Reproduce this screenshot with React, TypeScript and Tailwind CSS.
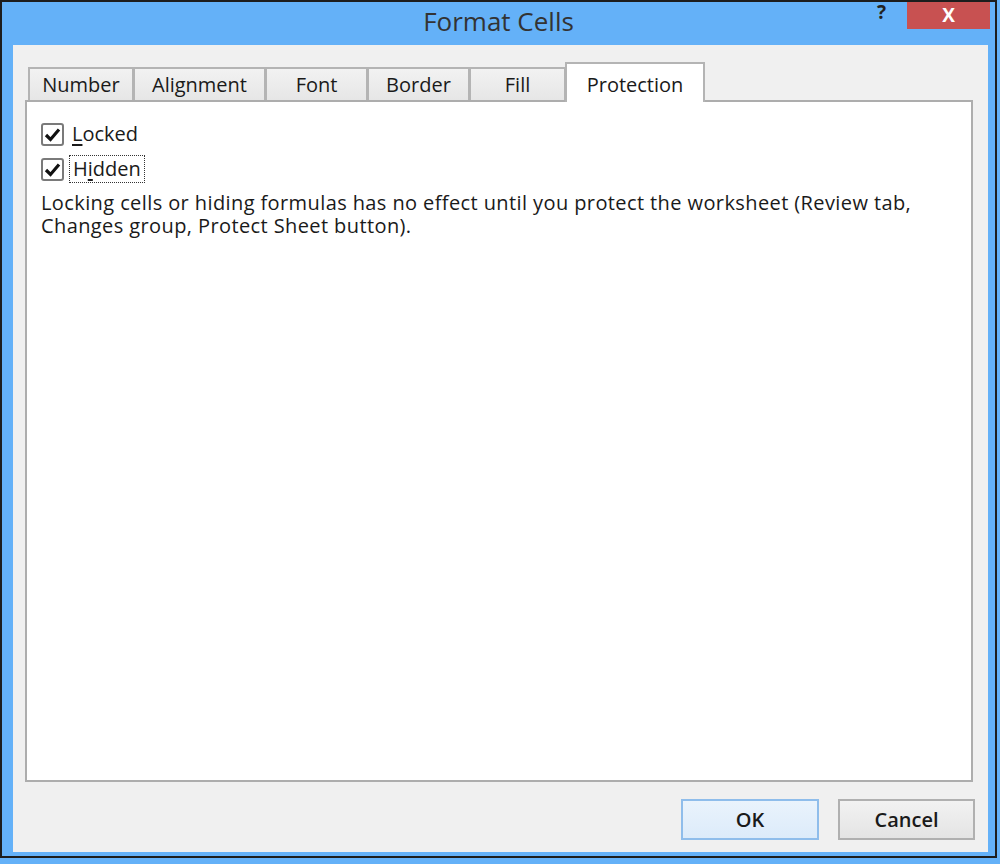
import { useState } from "react"

type Tab = { name: string; width: string }

const tabs: Tab[] = [
  { name: "Number", width: "w-[106px]" },
  { name: "Alignment", width: "w-[133px]" },
  { name: "Font", width: "w-[103px]" },
  { name: "Border", width: "w-[103px]" },
  { name: "Fill", width: "w-[97px]" },
]

const CheckBox = ({ checked }: { checked: boolean }) => (
  <div className="w-[23px] h-[23px] rounded-[3px] border-2 border-[#7a7a7a] bg-white flex items-center justify-center shrink-0">
    {checked && (
      <svg width="17" height="15" viewBox="0 0 17 15">
        <path d="M2 8 L6.5 12.5 L15 2.5" fill="none" stroke="#111" strokeWidth="3.2" />
      </svg>
    )}
  </div>
)

const App = () => {
  const [locked, setLocked] = useState(true)
  const [hidden, setHidden] = useState(true)

  return (
    <div
      className="w-[1000px] h-[864px] bg-[#64b1f8]"
      style={{ fontFamily: '"Open Sans", "Noto Sans", sans-serif' }}
    >
      <div className="w-[997px] h-[858px] border-2 border-[#1d1d1d] flex flex-col">
        {/* title bar */}
        <div className="h-[43px] flex shrink-0">
          <div className="flex-1" />
          <div className="pt-[2px] text-[26px] leading-[34px] text-[#333]">Format Cells</div>
          <div className="flex-1 flex justify-end items-start">
            <div className="mr-[21px] mt-[-1px] text-[19px] leading-[22px] font-bold text-[#222]">?</div>
            <div className="w-[83px] h-[27px] mr-[5px] bg-[#c85151] flex items-center justify-center text-white text-[19px] font-bold leading-none">
              X
            </div>
          </div>
        </div>

        {/* client area */}
        <div className="flex-1 ml-[11px] mr-[7px] mb-[4px] bg-[#f0f0f0] pt-[17px] flex flex-col">
          <div className="flex items-end h-[38px] ml-[15px] text-[20px] text-[#1a1a1a]">
            {tabs.map((tab, i) => (
              <div
                key={tab.name}
                className={`${tab.width} h-[33px] ${
                  i > 0 ? "-ml-px" : ""
                } border-t-2 border-x-2 border-[#b4b4b4] bg-gradient-to-b from-[#f2f2f2] to-[#e6e6e6] flex items-center justify-center leading-none`}
              >
                {tab.name}
              </div>
            ))}
            <div className="w-[140px] h-[40px] -ml-px -mb-[2px] relative z-10 border-t-2 border-x-2 border-[#b4b4b4] bg-white flex items-center justify-center pt-[3px] leading-none">
              Protection
            </div>
          </div>

          <div className="ml-[12px] w-[948px] h-[682px] border-2 border-[#adadad] bg-white pl-[14px] pt-[18px] text-[20px] text-[#1a1a1a]">
            <div className="flex items-center h-[28px] cursor-default" onClick={() => setLocked(!locked)}>
              <CheckBox checked={locked} />
              <span className="ml-[8px] leading-none">
                <span className="underline underline-offset-[3px]">L</span>ocked
              </span>
            </div>
            <div className="flex items-center h-[28px] mt-[7px] cursor-default" onClick={() => setHidden(!hidden)}>
              <CheckBox checked={hidden} />
              <span className="ml-[5px] px-[3px] h-[28px] flex items-center border border-dotted border-[#333] leading-none">
                H<span className="underline underline-offset-[3px]">i</span>dden
              </span>
            </div>
            <p className="mt-[8px] text-[20px] tracking-[0.4px] leading-[23px] w-[900px]">
              Locking cells or hiding formulas has no effect until you protect the worksheet (Review tab,
              Changes group, Protect Sheet button).
            </p>
          </div>

          <div className="flex justify-end gap-[19px] mt-[17px] pr-[13px] text-[20px] font-semibold text-[#1a1a1a]">
            <button className="w-[138px] h-[41px] border-2 border-[#8fbdeb] bg-gradient-to-b from-[#eaf3fc] to-[#dcebfa] leading-none">
              OK
            </button>
            <button className="w-[137px] h-[41px] border-2 border-[#b0b0b0] bg-gradient-to-b from-[#f2f2f2] to-[#e4e4e4] leading-none">
              Cancel
            </button>
          </div>
        </div>
      </div>
    </div>
  )
}

export default App
